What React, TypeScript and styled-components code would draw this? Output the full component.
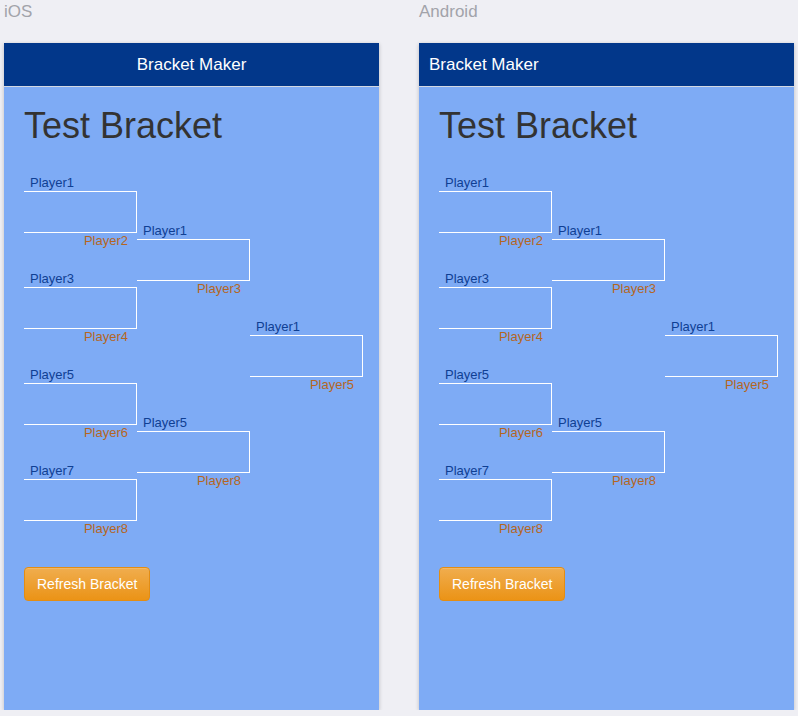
import styled, { createGlobalStyle } from 'styled-components';

const GlobalStyle = createGlobalStyle`
  html, body {
    margin: 0;
    padding: 0;
    background: #efeff4;
    font-family: "Liberation Sans", Arial, sans-serif;
  }
`;

type Platform = 'ios' | 'android';

// Matches per round, [top player, bottom player].
const rounds: [string, string][][] = [
  [
    ['Player1', 'Player2'],
    ['Player3', 'Player4'],
    ['Player5', 'Player6'],
    ['Player7', 'Player8'],
  ],
  [
    ['Player1', 'Player3'],
    ['Player5', 'Player8'],
  ],
  [['Player1', 'Player5']],
];

const Page = styled.div`
  display: flex;
  gap: 40px;
  padding: 2px 0 0 4px;
`;

const Column = styled.div`
  display: flex;
  flex-direction: column;
`;

const PlatformLabel = styled.div`
  font-size: 17px;
  line-height: 20px;
  color: #a2a3aa;
  margin-bottom: 21px;
`;

const Phone = styled.div`
  width: 375px;
  height: 667px;
  background: #7eabf5;
  box-shadow: 0 1px 4px rgba(0, 0, 0, 0.22);
  display: flex;
  flex-direction: column;
`;

const Header = styled.div<{ $platform: Platform }>`
  height: 42px;
  padding-top: 1px;
  background: #02378a;
  border-bottom: 1px solid #d3d8e2;
  color: #ffffff;
  font-size: 17px;
  display: flex;
  align-items: center;
  justify-content: ${({ $platform }) => ($platform === 'ios' ? 'center' : 'flex-start')};
  padding-left: ${({ $platform }) => ($platform === 'ios' ? '0' : '10px')};
`;

const Body = styled.div`
  padding: 20px;
  display: flex;
  flex-direction: column;
  align-items: flex-start;
`;

const Title = styled.h1`
  margin: 0 0 19px;
  font-size: 36px;
  line-height: 38px;
  font-weight: normal;
  color: #333333;
`;

const Bracket = styled.div`
  display: flex;
  height: 384px;
`;

const Round = styled.div`
  display: flex;
  flex-direction: column;
  width: 113px;
`;

const Slot = styled.div`
  flex: 1;
  display: flex;
  flex-direction: column;
  justify-content: center;
`;

const Name = styled.div<{ $side: 'top' | 'bottom' }>`
  font-size: 13px;
  line-height: 16px;
  height: 16px;
  white-space: nowrap;
  color: ${({ $side }) => ($side === 'top' ? '#0f3f93' : '#b5661f')};
  text-align: ${({ $side }) => ($side === 'top' ? 'left' : 'right')};
  padding: ${({ $side }) => ($side === 'top' ? '0 0 0 6px' : '0 9px 0 0')};
`;

const Box = styled.div`
  height: 40px;
  border: 1px solid #ffffff;
  border-left: none;
`;

const RefreshButton = styled.button`
  margin-top: 19px;
  height: 34px;
  padding: 0 12px;
  font-family: inherit;
  font-size: 14px;
  color: #ffffff;
  background: linear-gradient(to bottom, #f0ad4e, #eb9316);
  border: 1px solid #e38d13;
  border-radius: 4px;
  box-shadow: inset 0 1px 0 rgba(255, 255, 255, 0.15);
`;

function Match({ top, bottom }: { top: string; bottom: string }) {
  return (
    <Slot>
      <Name $side="top">{top}</Name>
      <Box />
      <Name $side="bottom">{bottom}</Name>
    </Slot>
  );
}

function Device({ platform }: { platform: Platform }) {
  return (
    <Column>
      <PlatformLabel>{platform === 'ios' ? 'iOS' : 'Android'}</PlatformLabel>
      <Phone>
        <Header $platform={platform}>Bracket Maker</Header>
        <Body>
          <Title>Test Bracket</Title>
          <Bracket>
            {rounds.map((matches, r) => (
              <Round key={r}>
                {matches.map(([a, b], i) => (
                  <Match key={i} top={a} bottom={b} />
                ))}
              </Round>
            ))}
          </Bracket>
          <RefreshButton>Refresh Bracket</RefreshButton>
        </Body>
      </Phone>
    </Column>
  );
}

export default function App() {
  return (
    <>
      <GlobalStyle />
      <Page>
        <Device platform="ios" />
        <Device platform="android" />
      </Page>
    </>
  );
}
